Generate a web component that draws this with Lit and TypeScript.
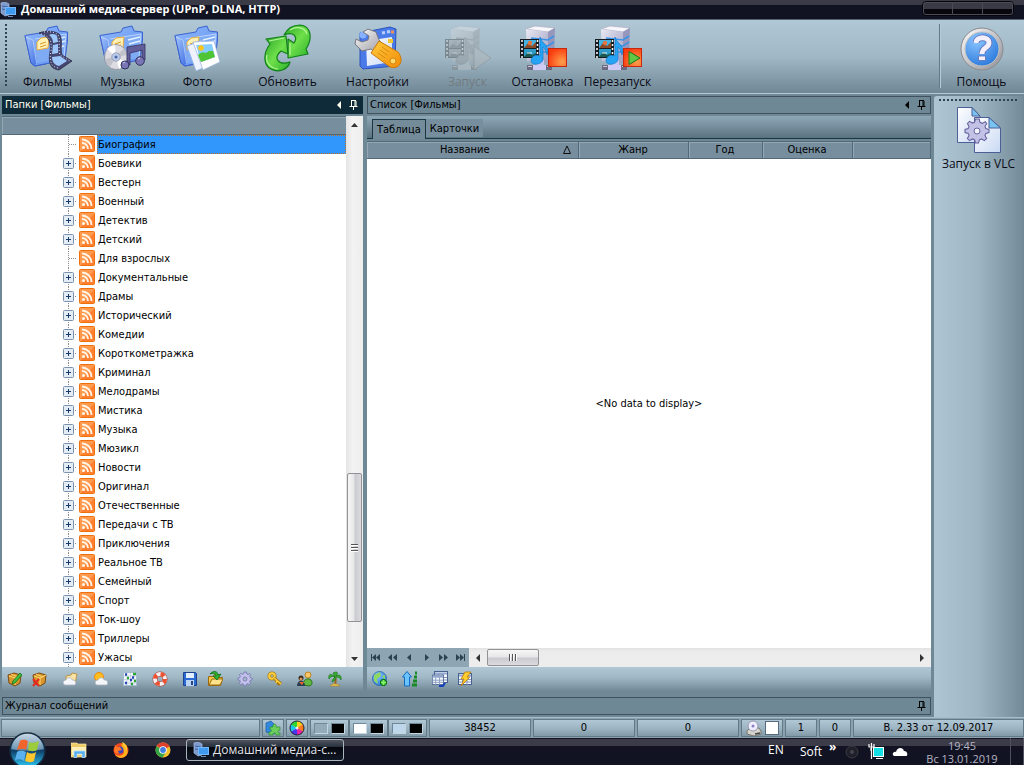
import { LitElement, html, css, svg, TemplateResult } from "lit";
import { customElement, property, state } from "lit/decorators.js";
import { classMap } from "lit/directives/class-map.js";

/* ---------- large 48px toolbar icons ---------- */

const defs = svg`<defs>
  <linearGradient id="blue" x1="0" y1="0" x2="1" y2="1"><stop offset="0" stop-color="#8fb8fa"/><stop offset="1" stop-color="#5f8ff0"/></linearGradient>
  <linearGradient id="front" x1="0" y1="0" x2="1" y2="1"><stop offset="0" stop-color="#a9c9fb"/><stop offset="1" stop-color="#3d6ee4"/></linearGradient>
  <linearGradient id="paper" x1="0" y1="0" x2="1" y2="1"><stop offset="0" stop-color="#ffffff"/><stop offset="1" stop-color="#c9d9f4"/></linearGradient>
  <linearGradient id="green" x1="0" y1="0" x2="1" y2="1"><stop offset="0" stop-color="#2aa52a"/><stop offset=".5" stop-color="#6fe04a"/><stop offset="1" stop-color="#2bb02b"/></linearGradient>
  <linearGradient id="steel" x1="0" y1="0" x2="1" y2="1"><stop offset="0" stop-color="#ffffff"/><stop offset="1" stop-color="#8c8c94"/></linearGradient>
  <linearGradient id="case" x1="0" y1="0" x2="1" y2="1"><stop offset="0" stop-color="#e9e8f2"/><stop offset="1" stop-color="#9c9cc0"/></linearGradient>
  <linearGradient id="orange" x1="0" y1="0" x2="1" y2="1"><stop offset="0" stop-color="#ffcb3c"/><stop offset="1" stop-color="#f28c08"/></linearGradient>
  <radialGradient id="red" cx=".75" cy=".75" r=".8"><stop offset="0" stop-color="#ffa04a"/><stop offset="1" stop-color="#f93c10"/></radialGradient>
  <radialGradient id="ball" cx=".35" cy=".25" r=".9"><stop offset="0" stop-color="#8cc6ff"/><stop offset="1" stop-color="#1f70d8"/></radialGradient>
</defs>`;

const folder = svg`
  <path d="M1 11.500 L22 8 L24 4 L33 2 L35 7 L43.500 8 L43.500 16 L41 36 L11 42 L7 39 Z" fill="url(#blue)" stroke="#3c63cf" stroke-linejoin="round"/>
  <path d="M10 15 L42 10 L40 34 L13 39 Z" fill="#7fabf5"/>
  <path d="M11 15 L42 10 L40 34" fill="none" stroke="#c9dfff" stroke-width=".8"/>
  <path d="M29 16 L41 13 M30 20 L41 17 M31 24 L40 22" stroke="#e4f1ff" stroke-width="1.500"/>
  <path d="M13 18 L17 14 L25 13 L24 24 L13 26 Z" fill="#fff0b4" stroke="#e8a93c"/>
  <path d="M16 20 L22 18 M16 23 L22 21" stroke="#d79a2c"/>
  <path d="M1 11.500 L9 15 L13 38 L10 42 L7 39 Z" fill="url(#front)"/>
  <path d="M2 13 L9 16 L12.500 39" fill="none" stroke="#c5dbff" stroke-width=".7"/>
  <path d="M1 11.500 L7 39 L11 42 L22 40" fill="none" stroke="#3c63cf"/>`;

const server = svg`
  <path d="M7 5 L16 2 L36 4 L29 8 Z" fill="#f7f6fb" stroke="#a9a6bc" stroke-width=".6"/>
  <path d="M7 5 L29 8 L29 39 L8 37 Z" fill="url(#case)"/>
  <path d="M29 8 L36 4 L35 35 L29 39 Z" fill="#9796bb"/>
  <path d="M12 14 L29 16 L35 12 M20 21 L29 22 L35 18 M24 28 L29 28 L35 24" fill="none" stroke="#3a93e8" stroke-width="1.600"/>
  <rect x="1" y="15" width="19" height="19" fill="#161c22"/>
  <rect x="5" y="16" width="12" height="8" fill="#44b3e4"/><rect x="5" y="25" width="12" height="8" fill="#2f9cc8"/>
  <path d="M5 24 L9 19 L13 22 L17 18 L17 24 Z" fill="#8c4b28"/><circle cx="11" cy="19" r="2.200" fill="#e5733c"/>
  <path d="M5 33 L9 28 L13 31 L17 29 L17 33 Z" fill="#1c5a50"/><path d="M8 29h5" stroke="#e8f4ff"/>
  <path d="M3 16 V34 M18.500 16 V34" stroke="#fff" stroke-width="1.500" stroke-dasharray="2 2"/>
  <path d="M18 36 H25 V43 H18 Z" fill="#c7c7f2"/><path d="M9 43.500 H33" stroke="#cfcbf5" stroke-width="5"/>
  <path d="M8 41h6v5H8z M27 41h6v5h-6z" fill="#6b6a80"/><path d="M9 42.500h4 M28 42.500h4" stroke="#c9c8d8"/>
  <path d="M21 13 C23 20 31 21 28 31 C27 26 25 24 24 23 L24 34 C25 41 12 42 12 37 C12 32 18 30 21 32 Z" fill="#27a5f4" stroke="#167bd0" stroke-width=".7"/>`;

const toothed = "M8 0 L9.500 0 L10 2.200 L11.500 2.900 L13.500 1.800 L14.500 3 L13.300 5 L13.900 6.400 L16 7 V9 L13.900 9.600 L13.300 11 L14.400 13 L13 14.400 L11 13.300 L9.600 13.900 L9 16 H7 L6.400 13.900 L5 13.300 L3 14.400 L1.600 13 L2.700 11 L2.100 9.600 L0 9 V7 L2.100 6.400 L2.700 5 L1.600 3 L3 1.600 L5 2.700 L6.400 2.100 L7 0 Z";

const big: Record<string, TemplateResult> = {
  films: svg`${folder}
    <path d="M15 9 C22 6 33 7 36 11 C39 17 36 24 38 31 L48 37 L35 46 C26 45 24 38 26 28 C27 20 26 12 15 9 Z" fill="#45466f" stroke="#23233d" stroke-width=".7"/>
    <path d="M25 11 C28 9 32 10 33 12 L34 18 L29 19 C29 16 28 13 25 11 Z M29 21 L34 20 L34 29 L28 30 Z M28 33 L36 32 L43 37 L35 42 C30 41 28 37 28 33 Z" fill="#9dc6fb"/>
    <path d="M20 8 C28 7 34 9 35 13 C36 18 34 25 36 31 L46 37 M17 10 C26 12 28 18 27 27 C25 37 27 43 34 44" fill="none" stroke="#dfe0f4" stroke-width="1" stroke-dasharray="1 2"/>`,
  music: svg`${folder}
    <ellipse cx="17" cy="33" rx="11.500" ry="12.500" fill="#dcdce2" stroke="#8f8f98" stroke-width=".8"/>
    <path d="M17 33 L8 25 A12 12 0 0 1 16 21 Z M17 33 L27 38 A12 12 0 0 1 20 45 Z" fill="#fff"/>
    <path d="M17 33 L25 24 A11 12 0 0 1 28 31 Z M17 33 L6 35 A11 12 0 0 0 11 43 Z" fill="#c2c2cb"/>
    <circle cx="17" cy="33" r="4.200" fill="#b9cbe9" stroke="#98a2b8"/><circle cx="17" cy="33" r="1.500" fill="#4a66a8"/>
    <path d="M28 23 L46 20 L46 36 L43 36 L43 26 L31 29 L31 41 L28 41 Z" fill="#625e9a" stroke="#33315e" stroke-width=".8"/>
    <circle cx="26" cy="41" r="4" fill="#7a76b6" stroke="#33315e"/><circle cx="41" cy="37" r="4.300" fill="#7a76b6" stroke="#33315e"/><path d="M24 39l2-1M39 35l2-1" stroke="#d3d2f2"/>`,
  photo: svg`${folder}
    <path d="M13 22 L28 16 L36 41 L22 47 Z" fill="#eef3ff" stroke="#8baee2" stroke-width=".8"/>
    <path d="M19 18 L40 17 L46 38 L29 46 Z" fill="#fff" stroke="#9db6dc" stroke-width=".8"/>
    <path d="M22 21 L38 20 L41 33 L27 38 Z" fill="#85ccff"/>
    <path d="M24 31 C29 26 31 31 35 27 L39 27 L41 33 L27 38 Z" fill="#4fc434"/><circle cx="27" cy="24" r="2.800" fill="#ffc41c"/>`,
  refresh: svg`
    <path d="M20 11 C24 3 30 1 36 1 C47 2 49 14 42 25 L44 30 L24 34 L24 15 L30 19 C34 13 30 7 20 11 Z" fill="url(#green)" stroke="#118018" stroke-width="1.200" stroke-linejoin="round"/>
    <path d="M2 15 L22 12 L24 30 L17 27 C9 34 14 42 26 38 C24 46 14 49 7 45 C-1 41 -1 29 6 20 Z" fill="url(#green)" stroke="#118018" stroke-width="1.200" stroke-linejoin="round"/>
    <path d="M26 6 C32 2 41 3 43 10 M5 17 L20 14 M3 31 C1 38 6 44 14 45 M26 19 V31" fill="none" stroke="#b4f79a" stroke-width="1.200"/>`,
  settings: svg`
    <path d="M6 9 L36 3 L42 5 L41 42 L9 45 L6 42 Z" fill="#4a79e8" stroke="#2d55ba"/>
    <path d="M12 17 L38 13 L38 38 L13 42 Z" fill="url(#paper)"/>
    <path d="M28 9 L31 8.500 M33 8 L36 7.500" stroke="#b7d0ff" stroke-width="3"/><path d="M34 15h5v4h-5z" fill="#f3c634"/><path d="M37 6.500h3v3h-3z" fill="#f0905c"/>
    <circle cx="9" cy="11" r="3.500" fill="#86b2ff"/>
    <path d="M14 5 L22 8 L25 16 L32 23 L24 31 L17 25 L8 27 L1 20 L2 15 L8 18 L14 16 L15 12 L9 8 Z" fill="url(#steel)" stroke="#777780" stroke-linejoin="round"/>
    <path d="M25 17 L44 28 C51 37 45 46 36 43 L17 29 Z" fill="url(#orange)" stroke="#cc7908" stroke-linejoin="round"/>
    <path d="M28 23 L35 28 M26 26 L33 31 M24 29 L31 34" stroke="#d98a10"/><circle cx="39" cy="37" r="3" fill="#ffd968" stroke="#d48712"/>`,
  start: svg`${server}<path d="M30 22 L47 34 L30 46 Z" fill="#b8b8b8" stroke="#777"/>`,
  stop: svg`${server}<rect x="29.500" y="24.500" width="18" height="18" fill="url(#red)" stroke="#c62810"/>`,
  restart: svg`${server}<rect x="29.500" y="24.500" width="18" height="18" fill="url(#red)" stroke="#c62810"/><path d="M35 27.500 L46 34 L35 40.500 Z" fill="#61c846" stroke="#167a1c"/>`,
  help: svg`
    <circle cx="24" cy="25" r="21" fill="url(#steel)" stroke="#8a8a8e"/><circle cx="24" cy="25" r="17" fill="url(#ball)" stroke="#c6c4c0"/>
    <path d="M18 19 C18 12 31 12 31 19 C31 24 24 23 24 30" fill="none" stroke="#5d6cb6" stroke-width="6.500"/>
    <path d="M18 19 C18 12 31 12 31 19 C31 24 24 23 24 30" fill="none" stroke="#f3f0fb" stroke-width="5"/><path d="M20.500 32h7v4.500h-7z" fill="#f3f0fb" stroke="#5d6cb6" stroke-width=".8"/>`,
  vlc: svg`
    <path d="M2.500 1.500 H17 L25 10 V36.500 H2.500 Z" fill="url(#paper)" stroke="#4c5f96"/><path d="M17 1.500 L25 10 H17 Z" fill="#78c3ef" stroke="#4c5f96"/>
    <path d="M19.500 11.500 H34 L45.500 22 V46.500 H19.500 Z" fill="url(#paper)" stroke="#4c5f96"/><path d="M34 11.500 L45.500 22 H34 Z" fill="#78c3ef" stroke="#4c5f96"/>
    <path transform="translate(10 13) scale(1.500)" d=${toothed} fill="#c2c1e6" stroke="#65619c" stroke-width=".7"/>
    <circle cx="22" cy="25" r="3" fill="#f2f4ff" stroke="#68649e"/>`,
};

/* ---------- small 16px icons ---------- */

const box = svg`<path d="M1 4 L7 2 L14 4 L13 12 L8 15 L2 12 Z" fill="#d9962c" stroke="#7b4a10"/><path d="M2 5 L8 7 L14 4 M8 7 V14 M4 3 L11 6" fill="none" stroke="#ffd873"/>`;
const cloud = svg`<path d="M3 14 C0 13 1 9 4 9 C5 6 10 6 10 9 C14 8 15 14 12 14 Z" fill="#f5f6fa" stroke="#a9b1bf" stroke-width=".8"/>`;
const grid = svg`<rect x="1.500" y="2.500" width="13" height="11" fill="#f4f7fd" stroke="#49618e"/><path d="M2 4.500h12" stroke="#8fa6d0" stroke-width="2"/><path d="M2 8.500h12M2 11h12M5.500 5v9M10 5v9" stroke="#8497bb"/>`;

const small: Record<string, TemplateResult> = {
  app: svg`<path d="M1 1 L5 0 L9 2 V13 L5 14 L1 11 Z" fill="#7f9bcc" stroke="#a9bfe6" stroke-width=".7"/><path d="M2 4l6 1M2 7l6 1" stroke="#3f63a8"/><rect x="5.500" y="5.500" width="10" height="7" fill="#3f9af0" stroke="#79b8f8"/><path d="M8 14.500h5" stroke="#6f8db8"/>`,
  rss: svg`<rect x=".5" y=".5" width="15" height="15" rx="1" fill="#ff9a4e" stroke="#f0700c"/><path d="M2 15 L15 2 V15 Z" fill="#ff6f1c" opacity=".6"/><circle cx="4.500" cy="11.500" r="1.600" fill="#fff4e6"/><path d="M3 7 A6 6 0 0 1 9 13 M3 3.500 A9.500 9.500 0 0 1 12.500 13" fill="none" stroke="#fff4e6" stroke-width="1.900"/>`,
  edit: svg`${box}<path d="M6 10 L13 2 L15 4 L8 12 L5 13 Z" fill="#42bb3a" stroke="#16731a" stroke-width=".8"/>`,
  remove: svg`${box}<path d="M1 8 L7 15 M7 8 L1 15" stroke="#e52a20" stroke-width="2"/>`,
  cloudFolder: svg`<path d="M4 5 L9 4 L10 2 L15 3 L13 13 H4 Z" fill="#f9e3a4" stroke="#b8944c"/>${cloud}`,
  weather: svg`<circle cx="7" cy="6" r="4.500" fill="#ffbd20" stroke="#ef8812"/><g transform="translate(2)">${cloud}</g>`,
  matrix: svg`<rect x="1.500" y="1.500" width="13" height="13" fill="#f2f6fc" stroke="#a6bdd2"/><path d="M5 2v12M8.500 2v12M12 2v12M2 5h12M2 8.500h12M2 12h12" stroke="#bccbdd" stroke-width=".7"/><path d="M3 3.500h2M10 6.500h2M3 12h2M8 9h2" stroke="#2746b8" stroke-width="2.500"/><path d="M11 3h3M5 7h2M12 10h2M9 13h2" stroke="#2fa632" stroke-width="2.500"/>`,
  lifebuoy: svg`<circle cx="8" cy="8" r="5" fill="none" stroke="#a63726" stroke-width="5"/><circle cx="8" cy="8" r="5" fill="none" stroke="#f3f1f4" stroke-width="4"/><circle cx="8" cy="8" r="5" fill="none" stroke="#ee5030" stroke-width="4" stroke-dasharray="4 3.850"/>`,
  save: svg`<path d="M1.500 1.500h12l1 1v12h-13z" fill="#2b6ad0" stroke="#1d4390"/><path d="M4 2h8v5H4z" fill="#e4f0ff"/><path d="M4 9h8v6H4z" fill="#bcd5f5"/><path d="M9 10h2v4H9z" fill="#26477e"/>`,
  open: svg`<path d="M1.500 5.500h5l1-2h4v3h4l-2 8h-12z" fill="#f8c742" stroke="#9a6a12"/><path d="M2 14l3-6h11l-3 6z" fill="#ffe28a" stroke="#9a6a12"/><path d="M3 3 C6 -1 11 0 11 4 L14 3 L10 9 L6 5 L9 5 C8 2 6 2 3 3Z" fill="#2fae30" stroke="#147019" stroke-width=".8"/>`,
  gear: svg`<path transform="translate(1 1) scale(.875)" d=${toothed} fill="#c2c1ec" stroke="#7270ae" stroke-width=".9"/><circle cx="8" cy="8" r="2" fill="#a2b8cd" stroke="#7472ae" stroke-width=".8"/>`,
  key: svg`<circle cx="5" cy="5" r="2.800" fill="none" stroke="#a67714" stroke-width="3.500"/><circle cx="5" cy="5" r="2.800" fill="none" stroke="#fed33d" stroke-width="2"/><path d="M7 7l7 6M10 10l-1 2M12 12l-1 2" stroke="#a67714" stroke-width="3"/><path d="M7 7l7 6M10 10l-1 2" stroke="#fed33d" stroke-width="1.500"/>`,
  people: svg`<circle cx="11" cy="4" r="3" fill="#f8c468" stroke="#c08424"/><path d="M6 14c0-8 10-8 9-1l-2 2z" fill="#60b843" stroke="#2f7420"/><circle cx="4" cy="7" r="2.500" fill="#3a2a1a"/><circle cx="4" cy="8" r="1.500" fill="#dc9658"/><path d="M0 15c0-7 8-7 8 0z" fill="#2d3b50"/><path d="M2 11h5l-2 3z" fill="#ea6830"/>`,
  palm: svg`<path d="M8 6 C10 9 8 11 8 14" stroke="#9a631b" stroke-width="2" fill="none"/><path d="M8 6 C3 1 1 4 2 8 C4 5 6 5 8 6 C6 8 5 9 5 11 C8 10 9 8 9 6 C12 6 13 7 14 9 C15 4 12 3 9 5 C12 1 10 0 6 2 Z" fill="#37ad2c" stroke="#176a1a" stroke-width=".6"/><path d="M3 15 C6 12 10 12 13 15 Z" fill="#f2ce51" stroke="#a5812e" stroke-width=".7"/>`,
  globe: svg`<circle cx="7.500" cy="7.500" r="7" fill="url(#ball)" stroke="#195d9e" stroke-width=".7"/><path d="M2 4 L8 1 L9 5 L5 8 L6 13 L2 10 Z M10 5 L13 4 V9 Z" fill="#8fd862"/><path d="M11.500 8v7M8 11.500h7" stroke="#087911" stroke-width="4"/><path d="M11.500 9v5M9 11.500h5" stroke="#85f16a" stroke-width="2"/>`,
  sort: svg`<path d="M5 .5 L9.500 6 H7.500 V15 H2.500 V6 H.5 Z" fill="#6cc4ff" stroke="#1469c2"/><path d="M13 2h2M12 6h3M11 10h4M10 14h5" stroke="#168b25" stroke-width="3"/>`,
  table: svg`<g transform="translate(1 -2)">${grid}</g><g transform="translate(-1 2) scale(.85)">${grid}</g><path d="M7 15h4l2-3" stroke="#1642ba" stroke-width="2" fill="none"/>`,
  lightning: svg`${grid}<path d="M8 1 L14 1 L10 6 H13 L4 15 L7 8 H4 Z" fill="#ffcf2d" stroke="#bb7911" stroke-width=".8"/>`,
  puzzle: svg`<path d="M1 3 L6 1 L9 4 V14 L1 12 Z" fill="#3189df" stroke="#1d5ca0" stroke-width=".7"/><path d="M5 7h3c-1-4 4-4 3 0h4v3c-3 0-3 3 0 3v2h-4c0-3-3-3-3 0H4v-3c3 0 3-2 1-3Z" fill="#6ccf5c" stroke="#2a8b2d" stroke-width=".7"/>`,
  wheel: svg`<path d="M8 8V1A7 7 0 0 1 14 4.500Z" fill="#f4d318"/><path d="M8 8l6-3.500a7 7 0 0 1 0 7Z" fill="#ff7a18"/><path d="M8 8l6 3.500A7 7 0 0 1 8 15Z" fill="#e823a8"/><path d="M8 8v7a7 7 0 0 1-6-3.500Z" fill="#4834ef"/><path d="M8 8l-6 3.500a7 7 0 0 1 0-7Z" fill="#18c6e8"/><path d="M8 8L2 4.500A7 7 0 0 1 8 1Z" fill="#2fd530"/><circle cx="8" cy="8" r="7" fill="none" stroke="#223"/><circle cx="8" cy="8" r="1.500" fill="#fff" opacity=".8"/>`,
  drive: svg`<path d="M1 11 L4 8 H13 L15 11 V14 L8 16 L1 14 Z" fill="#d4d2cc" stroke="#77756e"/><circle cx="7" cy="6" r="5" fill="#eef" stroke="#9995ae"/><circle cx="7" cy="6" r="1.500" fill="#8f80c4"/><path d="M9 14l5-1" stroke="#444" stroke-width="1.500"/>`,
  explorer: svg`<path d="M0 1h6l1 1h8v13H0z" fill="#edcc67" stroke="#fae9a9" stroke-width=".7"/><path d="M1 5h14v8H1z" fill="#fff0b8"/><path d="M3 15.500V9h11v6.500h-3V12H6v3.500z" fill="#57aef0" stroke="#b9e1ff" stroke-width=".7"/>`,
  firefox: svg`<circle cx="8" cy="8.500" r="7.500" fill="#f24a1d"/><path d="M8 2 C13 2 16 8 14 12 C12 17 4 17 2 12 C5 15 11 14 11 10 Z" fill="#ffb31d"/><circle cx="7" cy="8" r="3.500" fill="#3a46c0"/><path d="M1 9 L2 3 L4 5 L7 5 L9 8 L5 9 L6 11 C4 12 2 11 1 9Z" fill="#ff7726"/><path d="M9 0 C10 4 14 4 13 9 C16 5 12 1 9 0Z" fill="#ffd83b"/>`,
  chrome: svg`<circle cx="8" cy="8" r="7.500" fill="#f5c12b"/><path d="M8 8 L1.500 4 A7.500 7.500 0 0 1 14.500 4.500 Z" fill="#e0412e"/><path d="M8 8 L1.500 4.300 A7.500 7.500 0 0 0 7.500 15.500 L11 10 Z" fill="#35a449"/><circle cx="8" cy="8" r="3.800" fill="#fff"/><circle cx="8" cy="8" r="2.900" fill="#3f7fe2"/>`,
  disc: svg`<circle cx="8" cy="9" r="6" fill="#20202b" stroke="#393944"/><circle cx="8" cy="9" r="2" fill="#44444e"/>`,
  monitor: svg`<rect x="5.500" y="4.500" width="10" height="9" fill="#14dfe4" stroke="#fff"/><path d="M3.500 0v16M1 1v3h5V1M3 5v3" stroke="#fff" fill="none" stroke-width="1.200"/><path d="M8 15.500h7" stroke="#fff"/>`,
  skyCloud: svg`<path d="M2 13 C-1 11 2 8 4 9 C5 4 11 4 12 8 C16 8 16 13 14 13 Z" fill="#fff"/>`,
};

const icon16 = (name: string) =>
  html`<svg width="16" height="16" viewBox="0 0 16 16" aria-hidden="true">${defs}${small[name]}</svg>`;

const pinIcon = html`<svg width="9" height="10" viewBox="0 0 9 10" aria-hidden="true"><path d="M2 .5H7M2.500 1V6M6 1V6M7 1V6M.5 6.500H8.500M4.500 7V10" stroke="currentColor" fill="none"/></svg>`;
const leftArrow = html`<svg width="4" height="8" viewBox="0 0 4 8" aria-hidden="true"><path d="M4 0V8L0 4Z" fill="currentColor"/></svg>`;

@customElement("tool-button")
class ToolButton extends LitElement {
  @property() icon = "";
  @property() label = "";
  @property({ type: Boolean }) disabled = false;

  static styles = css`
    :host { display: block; width: 75px; }
    .tool {
      width: 100%; display: flex; flex-direction: column; align-items: center;
      border: 0; padding: 0; background: none; color: #0a0a14;
      font: 12px/20px "Open Sans", "Noto Sans", sans-serif; white-space: nowrap;
    }
    .tool:disabled { color: #737b80; }
    .tool:disabled svg { filter: grayscale(1) contrast(0.7) brightness(1.1); opacity: 0.4; }
  `;

  render() {
    return html`<button class="tool" ?disabled=${this.disabled}>
      <svg width="48" height="48" viewBox="0 0 48 48" aria-hidden="true">${defs}${big[this.icon]}</svg>
      <span>${this.label}</span>
    </button>`;
  }
}

@customElement("panel-header")
class PanelHeader extends LitElement {
  @property() label = "";
  @property({ type: Boolean, reflect: true }) active = false;
  @property({ type: Boolean }) pinOnly = false;

  static styles = css`
    :host {
      display: flex; align-items: center; gap: 8px; box-sizing: border-box; height: 18px;
      padding: 0 4px 0 2px; border: 1px solid #40525f; background: #6f8896; color: #000;
      font: 11px/16px "DejaVu Sans Condensed", "DejaVu Sans", sans-serif;
    }
    :host([active]) { background: #0f2a38; border-color: #0f2a38; color: #fffff0; }
    .name { flex: 1; font: inherit; margin: 0; }
    .act { display: flex; border: 0; padding: 0; background: none; color: inherit; }
  `;

  render() {
    return html`<h2 class="name">${this.label}</h2>
      ${this.pinOnly ? null : html`<button class="act" aria-label="Свернуть">${leftArrow}</button>`}
      <button class="act" aria-label="Закрепить">${pinIcon}</button>`;
  }
}

const genres = [
  "Биография", "Боевики", "Вестерн", "Военный", "Детектив", "Детский", "Для взрослых",
  "Документальные", "Драмы", "Исторический", "Комедии", "Короткометражка", "Криминал",
  "Мелодрамы", "Мистика", "Музыка", "Мюзикл", "Новости", "Оригинал", "Отечественные",
  "Передачи с ТВ", "Приключения", "Реальное ТВ", "Семейный", "Спорт", "Ток-шоу",
  "Триллеры", "Ужасы",
];
const leaves = new Set(["Биография", "Для взрослых"]);

@customElement("app-root")
class AppRoot extends LitElement {
  @state() private selected = "Биография";
  @state() private tab = "Таблица";

  static styles = css`
    :host {
      display: flex; flex-direction: column; height: 100vh; overflow: hidden;
      background: #6f8896; color: #000; cursor: default;
      font: 11px/16px "DejaVu Sans Condensed", "DejaVu Sans", sans-serif;
    }
    button { font: inherit; color: inherit; padding: 0; border: 0; background: none; }
    svg { display: block; flex: none; }

    .title {
      flex: none; display: flex; align-items: center; gap: 5px; height: 19px; padding-right: 10px;
      background: linear-gradient(#3b3b47 5px, #121322 5px); border-bottom: 1px solid #52626f; color: #fff;
    }
    .title h1 { flex: 1; margin: 0 0 2px; font: bold 11px/16px "Open Sans", "Noto Sans", sans-serif; }
    .winbtns { display: flex; align-self: flex-start; margin-top: 1px; border: 1px solid #05050a; border-radius: 4px; }
    .winbtns button { width: 30px; height: 13px; border: 1px solid #4b4b57; border-left-width: 0; background: linear-gradient(#3a3a46 6px, #07070d 6px); }
    .winbtns button:first-child { border-left-width: 1px; border-radius: 3px 0 0 3px; }
    .winbtns button:last-child { border-radius: 0 3px 3px 0; }

    .bar {
      flex: none; box-sizing: border-box; display: flex; align-items: flex-start; height: 74px; padding: 4px 5px 0 5px;
      background: linear-gradient(#b0c7d6, #a1b8c6 50%, #708896); border-bottom: 1px solid #b3cad8;
    }
    .grip { width: 2px; height: 64px; margin-right: 3px; background: repeating-linear-gradient(#2c4552 0 2px, transparent 2px 4px); }
    .group { display: flex; margin-right: 15px; }
    .help { display: flex; margin-left: auto; height: 64px; border-left: 1px solid #647987; box-shadow: inset 1px 0 #b6ccd9; padding-left: 4px; }

    .main { flex: 1; min-height: 0; display: flex; gap: 3px; padding: 2px 1px 0 2px; }
    .work { flex: 1; min-width: 0; display: flex; flex-direction: column; gap: 1px; padding-bottom: 2px; }
    .docks { flex: 1; min-height: 0; display: flex; gap: 4px; }
    .dock { display: flex; flex-direction: column; min-height: 0; gap: 2px; }
    .folders { flex: 0 0 361px; }
    .list { flex: 1; min-width: 0; }
    .dockbody { flex: 1; min-height: 0; display: flex; flex-direction: column; }

    .treearea { flex: 1; min-height: 0; display: flex; background: #fff; }
    .treecol { flex: 1; min-width: 0; overflow: hidden; }
    .treehead { height: 17px; border: solid #53697a; border-width: 1px 0; background: #768e9d; box-shadow: inset 1px 1px #93a8b5; }
    .tree { list-style: none; margin: 0; padding: 0; }
    .node { display: flex; align-items: center; height: 19px; padding-left: 59px; }
    .node > svg { margin-top: -2px; }
    .branch {
      flex: none; width: 18px; height: 19px; box-sizing: border-box; padding: 4px 0 0 2px;
      background:
        repeating-linear-gradient(#909090 0 1px, transparent 1px 2px) 7px 0 / 1px 100% no-repeat,
        repeating-linear-gradient(90deg, #909090 0 1px, transparent 1px 2px) 8px 9px / 8px 1px no-repeat;
    }
    .branch button { display: block; }
    .caption { flex: 1; display: block; height: 19px; line-height: 17px; margin-left: 2px; border: 1px solid transparent; text-align: left; }
    .selected { background: #3297fd; border: 1px dotted #c46c1e; }

    .vscroll { width: 17px; display: flex; flex-direction: column; align-items: center; background: linear-gradient(90deg, #e4e4e4, #f3f3f3 40%, #ededed); }
    .vscroll .end { width: 17px; height: 17px; display: grid; place-items: center; color: #333; }
    .vspace { flex: 340 1 0; }
    .vspace.after { flex-grow: 28; }
    .vthumb { box-sizing: border-box; width: 15px; height: 149px; display: grid; place-items: center; border: 1px solid #919196; border-radius: 2px; background: linear-gradient(90deg, #f6f6f6, #e6e6e8 48%, #c9cacf 52%, #dcdcdf); }

    .iconbar { flex: none; display: flex; height: 29px; background: linear-gradient(#b0c7d5, #a1b8c6 35%, #708896 85%); }
    .iconbar button { width: 25px; height: 24px; display: grid; place-items: center; }
    .iconbar .sep { margin-left: 5px; }

    .tabs { flex: none; display: flex; align-items: flex-end; height: 22px; padding-left: 5px; background: linear-gradient(#8fa8b7, #5b7381); border-bottom: 1px solid #1b3746; }
    .tabs button { height: 18px; padding: 0 4px; background: #768e9d; margin-bottom: 1px; line-height: 17px; }
    .tabs .on { height: 20px; margin-bottom: -1px; border: 1px solid #1b3746; border-bottom: 0; background: #748c9a; line-height: 18px; }
    .table { flex: none; width: 100%; table-layout: fixed; border-collapse: collapse; margin-top: 2px; background: #768e9d; }
    .table th { height: 16px; padding: 0; font-weight: normal; border: solid #53697a; border-width: 1px 1px 1px 0; box-shadow: inset 1px 1px #93a8b5; }
    .c1 { width: 211px; } .c2 { width: 110px; } .c3 { width: 74px; } .c4 { width: 90px; }
    .sorted { display: flex; align-items: center; justify-content: flex-end; padding-right: 7px; }
    .sorted span { flex: 1; text-align: center; }
    .sorted svg { margin-bottom: 2px; }
    .empty { flex: 1; min-height: 0; display: grid; place-items: center; background: #fff; }

    .hrow { flex: none; display: flex; height: 19px; background: linear-gradient(#e2e2e2, #ececec 20%, #ededed); }
    .nav { display: flex; background: #8ea6b4; color: #2a4350; }
    .nav button { width: 17px; display: grid; place-items: center; }
    .arrow { width: 18px; display: grid; place-items: center; color: #333; }
    .hthumb { box-sizing: border-box; width: 52px; height: 17px; margin: 1px 0; display: grid; place-items: center; border: 1px solid #919196; border-radius: 2px; background: linear-gradient(#f6f6f6, #e6e6e8 48%, #c9cacf 52%, #dcdcdf); }
    .push { margin-left: auto; }

    .side { flex: none; box-sizing: border-box; width: 89px; display: flex; flex-direction: column; align-items: center; gap: 5px; padding-top: 3px; border-radius: 3px 0 0 0; background: linear-gradient(90deg, #aec5d4, #9eb5c3 50%, #748c9a); }
    .dots { width: 79px; height: 2px; background: repeating-linear-gradient(90deg, #2c4552 0 2px, transparent 2px 4px); }

    .status { flex: none; display: flex; gap: 2px; height: 21px; padding: 1px 0 0 1px; box-sizing: border-box; background: #8aa1af; border-top: 1px solid #a8becb; }
    .cell { box-sizing: border-box; height: 18px; border: 1px solid #627987; background: linear-gradient(#b0c7d5, #9cb3c1 55%, #829aa8); display: flex; align-items: center; justify-content: center; }
    .fill { flex: 1; } .w22 { width: 22px; } .w102 { width: 102px; } .w32 { width: 32px; }
    .w42 { width: 42px; gap: 3px; } .version { width: 171px; }
    .swatches { display: flex; }
    .pair { width: 39px; gap: 3px; }
    .sw { width: 14px; height: 11px; border: 1px solid #c3d5e0; border-color: #71889a #c3d5e0 #c3d5e0 #71889a; box-sizing: border-box; }
    .black { background: #000; } .grey { background: #94acba; } .white { background: #fff; } .sky { background: #bdd6ea; }
    .check { appearance: none; box-sizing: border-box; width: 14px; height: 14px; margin: 0; border: 1px solid #566c7c; background: #fff; }

    .taskbar {
      flex: none; display: flex; align-items: flex-start; height: 27px; padding-left: 9px;
      background: linear-gradient(#15151f 1px, #3c3b48 1px 8px, #121322 8px); color: #fff;
      font: 12px/16px "Open Sans", "Noto Sans", sans-serif;
    }
    .orb { margin-top: -6px; z-index: 1; }
    .quick { display: flex; padding: 4px 0 0 12px; }
    .quick button { width: 42px; height: 16px; display: grid; place-items: center; }
    .task { box-sizing: border-box; display: flex; align-items: center; gap: 4px; width: 158px; height: 22px; margin: 1px 0 0 2px; padding: 0 6px; border: 1px solid #aab6be; border-radius: 3px; background: linear-gradient(#51535f, #24303c 35%, #05070d 36%, #111826); color: #e3e3ea; white-space: nowrap; }
    .tray { margin-left: auto; display: flex; align-items: flex-start; padding-top: 4px; }
    .lang { width: 32px; } .soft { width: 29px; padding-top: 2px; } .more { width: 11px; font-weight: bold; margin-top: -3px; }
    .tray .ticon { width: 24px; display: grid; place-items: center; padding-top: 1px; }
    .clock { width: 88px; margin: -3px 4px 0 6px; text-align: center; color: #b5b5c3; font-size: 11px; line-height: 13px; }
    .show { box-sizing: border-box; width: 14px; height: 27px; border: solid #51515e; border-width: 0 1px; margin-top: -4px; }
  `;

  private tool(name: string, label: string, sep = false) {
    return html`<button class=${classMap({ sep })} aria-label=${label}>${icon16(name)}</button>`;
  }

  private nav(label: string, path: string) {
    return html`<button aria-label=${label}><svg width="11" height="7" viewBox="0 0 11 7"><path d=${path} fill="currentColor"/></svg></button>`;
  }

  private node(name: string) {
    return html`<li class="node">
      <span class="branch">${leaves.has(name) ? null : html`<button aria-label="Развернуть ${name}">
        <svg width="11" height="11" viewBox="0 0 11 11"><rect x=".5" y=".5" width="10" height="10" rx="1" fill="#e4ecf5" stroke="#7c91ac"/><path d="M3 5.500H8M5.500 3V8" stroke="#173a68"/></svg>
      </button>`}</span>
      ${icon16("rss")}
      <button class=${classMap({ caption: true, selected: this.selected === name })} @click=${() => (this.selected = name)}>${name}</button>
    </li>`;
  }

  render() {
    return html`
      <header class="title">${icon16("app")}
        <h1>Домашний медиа-сервер (UPnP, DLNA, HTTP)</h1>
        <div class="winbtns"><button aria-label="Свернуть"></button><button aria-label="Развернуть"></button><button aria-label="Закрыть"></button></div>
      </header>

      <nav class="bar">
        <span class="grip"></span>
        <div class="group">
          <tool-button icon="films" label="Фильмы"></tool-button>
          <tool-button icon="music" label="Музыка"></tool-button>
          <tool-button icon="photo" label="Фото"></tool-button>
        </div>
        <div class="group"><tool-button icon="refresh" label="Обновить"></tool-button></div>
        <div class="group"><tool-button icon="settings" label="Настройки"></tool-button></div>
        <div class="group">
          <tool-button icon="start" label="Запуск" disabled></tool-button>
          <tool-button icon="stop" label="Остановка"></tool-button>
          <tool-button icon="restart" label="Перезапуск"></tool-button>
        </div>
        <div class="help"><tool-button icon="help" label="Помощь"></tool-button></div>
      </nav>

      <main class="main">
        <div class="work">
          <div class="docks">
            <section class="dock folders">
              <panel-header label="Папки [Фильмы]" active></panel-header>
              <div class="dockbody">
                <div class="treearea">
                  <div class="treecol">
                    <div class="treehead"></div>
                    <ul class="tree">${genres.map((g) => this.node(g))}</ul>
                  </div>
                  <div class="vscroll">
                    <button class="end" aria-label="Вверх"><svg width="7" height="4" viewBox="0 0 7 4"><path d="M0 4L3.500 0L7 4Z" fill="currentColor"/></svg></button>
                    <span class="vspace"></span>
                    <div class="vthumb"><svg width="7" height="8" viewBox="0 0 7 8"><path d="M0 .5H7M0 3.500H7M0 6.500H7" stroke="#555"/><path d="M0 1.500H7M0 4.500H7M0 7.500H7" stroke="#fff"/></svg></div>
                    <span class="vspace after"></span>
                    <button class="end" aria-label="Вниз"><svg width="7" height="4" viewBox="0 0 7 4"><path d="M0 0L3.500 4L7 0Z" fill="currentColor"/></svg></button>
                  </div>
                </div>
                <div class="iconbar">
                  ${this.tool("edit", "Изменить")}${this.tool("remove", "Удалить")}
                  ${this.tool("cloudFolder", "Облачная папка", true)}${this.tool("weather", "Погода", true)}
                  ${this.tool("matrix", "Таблица", true)}${this.tool("lifebuoy", "Помощь", true)}
                  ${this.tool("save", "Сохранить", true)}${this.tool("open", "Открыть")}
                  ${this.tool("gear", "Настройки", true)}${this.tool("key", "Доступ", true)}
                  ${this.tool("people", "Пользователи", true)}${this.tool("palm", "Отдых", true)}
                </div>
              </div>
            </section>

            <section class="dock list">
              <panel-header label="Список [Фильмы]"></panel-header>
              <div class="dockbody">
                <div class="tabs">
                  ${["Таблица", "Карточки"].map((t) => html`<button class=${classMap({ on: this.tab === t })} @click=${() => (this.tab = t)}>${t}</button>`)}
                </div>
                <table class="table">
                  <colgroup><col class="c1" /><col class="c2" /><col class="c3" /><col class="c4" /><col /></colgroup>
                  <thead><tr>
                    <th><div class="sorted"><span>Название</span><svg width="8" height="9" viewBox="0 0 8 9"><path d="M4 1L.5 8.500H7.500Z" fill="none" stroke="#111"/></svg></div></th>
                    <th>Жанр</th><th>Год</th><th>Оценка</th><th></th>
                  </tr></thead>
                </table>
                <div class="empty">&lt;No data to display&gt;</div>
                <div class="hrow">
                  <div class="nav">
                    ${this.nav("Первая", "M1 0h1v7H1zM6 0v7L2 3.500zM10 0v7L6 3.500z")}
                    ${this.nav("Страница назад", "M5 0v7L1 3.500zM10 0v7L6 3.500z")}
                    ${this.nav("Назад", "M7 0v7L3 3.500z")}
                    ${this.nav("Вперёд", "M4 0v7L8 3.500z")}
                    ${this.nav("Страница вперёд", "M1 0v7L5 3.500zM6 0v7L10 3.500z")}
                    ${this.nav("Последняя", "M1 0v7L5 3.500zM5 0v7L9 3.500zM9 0h1v7H9z")}
                  </div>
                  <button class="arrow" aria-label="Влево">${leftArrow}</button>
                  <div class="hthumb"><svg width="8" height="7" viewBox="0 0 8 7"><path d="M.5 0V7M3.500 0V7M6.500 0V7" stroke="#555"/><path d="M1.500 0V7M4.500 0V7M7.500 0V7" stroke="#fff"/></svg></div>
                  <button class="arrow push" aria-label="Вправо"><svg width="4" height="8" viewBox="0 0 4 8"><path d="M0 0V8L4 4Z" fill="currentColor"/></svg></button>
                </div>
                <div class="iconbar">
                  ${this.tool("globe", "Добавить")}${this.tool("sort", "Сортировка", true)}
                  ${this.tool("table", "Столбцы", true)}${this.tool("lightning", "Быстрый просмотр")}
                </div>
              </div>
            </section>
          </div>
          <panel-header label="Журнал сообщений" pinOnly></panel-header>
        </div>
        <aside class="side">
          <span class="dots"></span>
          <tool-button icon="vlc" label="Запуск в VLC"></tool-button>
        </aside>
      </main>

      <footer class="status">
        <span class="cell fill"></span>
        <button class="cell w22" aria-label="Модули">${icon16("puzzle")}</button>
        <button class="cell w22" aria-label="Цвета">${icon16("wheel")}</button>
        <span class="swatches">
          ${["grey", "white", "sky"].map((c) => html`<span class="cell pair"><button class="sw ${c}" aria-label="Фон"></button><button class="sw black" aria-label="Текст"></button></span>`)}
        </span>
        <span class="cell w102">38452</span>
        <span class="cell w102">0</span>
        <span class="cell w102">0</span>
        <span class="cell w42">${icon16("drive")}<input class="check" type="checkbox" aria-label="Диск" /></span>
        <span class="cell w32">1</span>
        <span class="cell w32">0</span>
        <span class="cell version">В. 2.33 от 12.09.2017</span>
      </footer>

      <footer class="taskbar">
        <button class="orb" aria-label="Пуск">
          <svg width="37" height="37" viewBox="0 0 37 37">
            <defs>
              <linearGradient id="orb" x1="0" y1="0" x2="0" y2="1"><stop offset="0" stop-color="#b9cfdf"/><stop offset=".45" stop-color="#42759b"/><stop offset=".5" stop-color="#0e3e66"/><stop offset="1" stop-color="#2fd0ff"/></linearGradient>
            </defs>
            <circle cx="18.500" cy="18.500" r="17.500" fill="url(#orb)" stroke="#162c40" stroke-width="1.500"/>
            <path d="M3 17 A15.500 15.500 0 0 1 34 17 C25 20 12 20 3 17Z" fill="#fff" opacity=".25"/>
            <path d="M11 9 C14 7 16 8 19 9 L17 18 C14 16 12 17 8 18 Z" fill="#f1642b"/>
            <path d="M20 10 C23 11 26 11 30 9 L28 18 C24 20 21 19 19 18 Z" fill="#9ccc3c"/>
            <path d="M8 20 C12 18 14 19 17 20 L15 29 C12 27 10 27 6 28 Z" fill="#5ab1ed"/>
            <path d="M18 20 C21 22 24 22 27 20 L25 29 C22 31 19 30 16 29 Z" fill="#fcc62d"/>
          </svg>
        </button>
        <div class="quick">
          <button aria-label="Проводник">${icon16("explorer")}</button>
          <button aria-label="Firefox">${icon16("firefox")}</button>
          <button aria-label="Chrome">${icon16("chrome")}</button>
        </div>
        <button class="task">${icon16("app")}<span>Домашний медиа-с...</span></button>
        <div class="tray">
          <span class="lang">EN</span>
          <span class="soft">Soft</span>
          <span class="more">»</span>
          <span class="ticon">${icon16("disc")}</span>
          <span class="ticon">${icon16("monitor")}</span>
          <span class="ticon">${icon16("skyCloud")}</span>
          <time class="clock">19:45<br />Вс 13.01.2019</time>
          <button class="show" aria-label="Показать рабочий стол"></button>
        </div>
      </footer>
    `;
  }
}
